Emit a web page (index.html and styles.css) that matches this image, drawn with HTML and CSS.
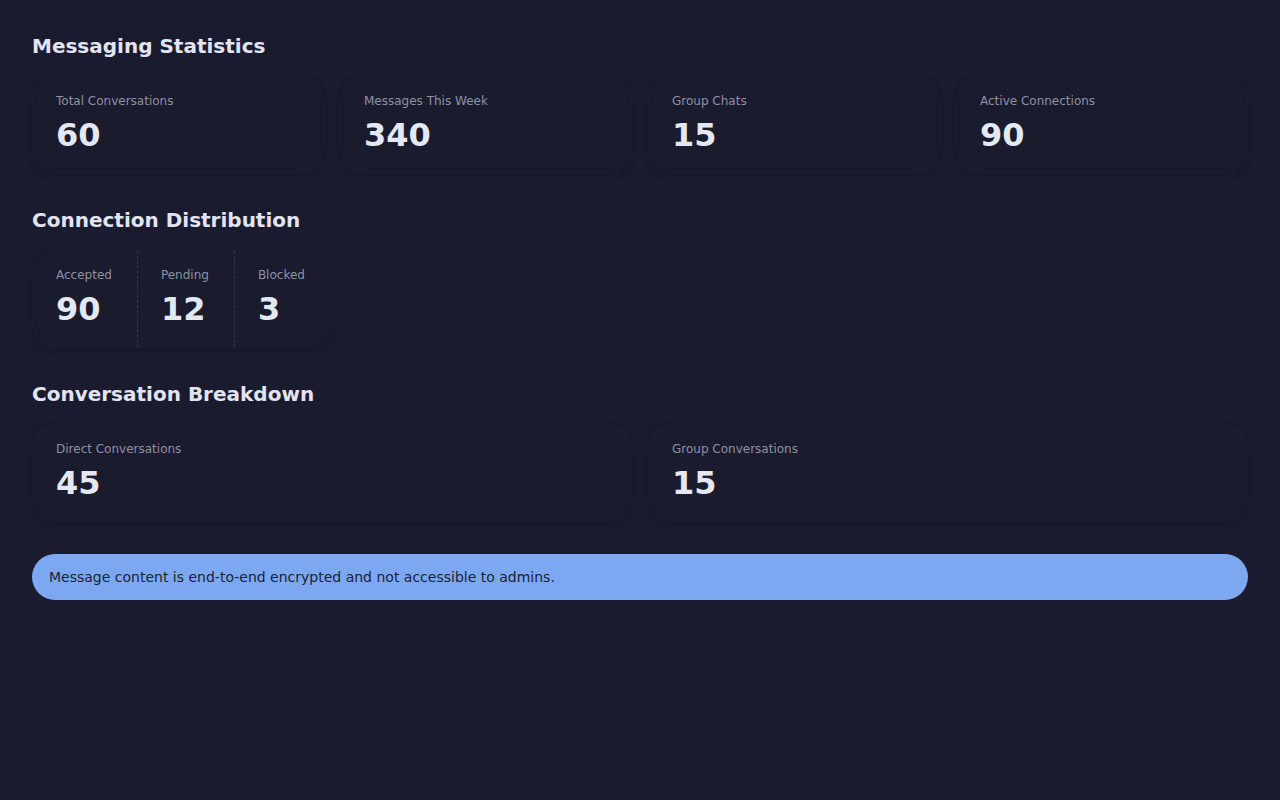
FILE: index.html
```html
<!DOCTYPE html>
<html lang="en">
<head>
  <meta charset="UTF-8" />
  <meta name="viewport" content="width=device-width, initial-scale=1.0"/>
  <title>Messaging Statistics</title>
  <link rel="stylesheet" href="styles.css">
</head>
<body>

  <h2>Messaging Statistics</h2>
  <div class="grid grid-4">
    <div class="card">
      <div class="label">Total Conversations</div>
      <div class="value">60</div>
    </div>
    <div class="card">
      <div class="label">Messages This Week</div>
      <div class="value">340</div>
    </div>
    <div class="card">
      <div class="label">Group Chats</div>
      <div class="value">15</div>
    </div>
    <div class="card">
      <div class="label">Active Connections</div>
      <div class="value">90</div>
    </div>
  </div>

  <h2>Connection Distribution</h2>
  <div class="card split">
    <div class="part">
      <div class="label">Accepted</div>
      <div class="value">90</div>
    </div>
    <div class="part">
      <div class="label">Pending</div>
      <div class="value">12</div>
    </div>
    <div class="part">
      <div class="label">Blocked</div>
      <div class="value">3</div>
    </div>
  </div>

  <h2>Conversation Breakdown</h2>
  <div class="grid grid-2">
    <div class="card">
      <div class="label">Direct Conversations</div>
      <div class="value">45</div>
    </div>
    <div class="card">
      <div class="label">Group Conversations</div>
      <div class="value">15</div>
    </div>
  </div>

  <div class="notice">Message content is end-to-end encrypted and not accessible to admins.</div>

</body>
</html>
```

FILE: styles.css
```css
body {
  margin: 0;
  padding: 32px;
  background: #1a1b2e;
  color: #e2e4f0;
  font-family: 'DejaVu Sans', sans-serif;
}
h2 {
  margin: 32px 0 16px;
  font-size: 20px;
  line-height: 28px;
  font-weight: bold;
  color: #e2e4f0;
}
h2:first-child {
  margin-top: 0;
}
.grid {
  display: grid;
  gap: 16px;
}
.grid-4 {
  grid-template-columns: repeat(4, 1fr);
}
.grid-2 {
  grid-template-columns: repeat(2, 1fr);
}
.card {
  background: #1a1b2d;
  border: 1px solid #1d1e31;
  border-radius: 24px;
  padding: 17px 23px 19px;
  box-shadow: 0 2px 5px rgba(0,0,0,0.15);
}
.label {
  font-size: 12px;
  line-height: 14px;
  color: #8f90a6;
  margin-bottom: 9px;
}
.value {
  font-size: 32px;
  line-height: 37px;
  font-weight: bold;
  color: #e3e8f2;
}
.split {
  display: inline-flex;
  padding: 0;
}
.part {
  padding: 17px 25px 19px 23px;
}
.part + .part {
  border-left: 1px dashed #34364f;
}
.notice {
  margin-top: 32px;
  background: #7ca8f2;
  color: #1c2133;
  border-radius: 23px;
  padding: 0 17px;
  height: 46px;
  line-height: 46px;
  font-size: 14px;
}
```
